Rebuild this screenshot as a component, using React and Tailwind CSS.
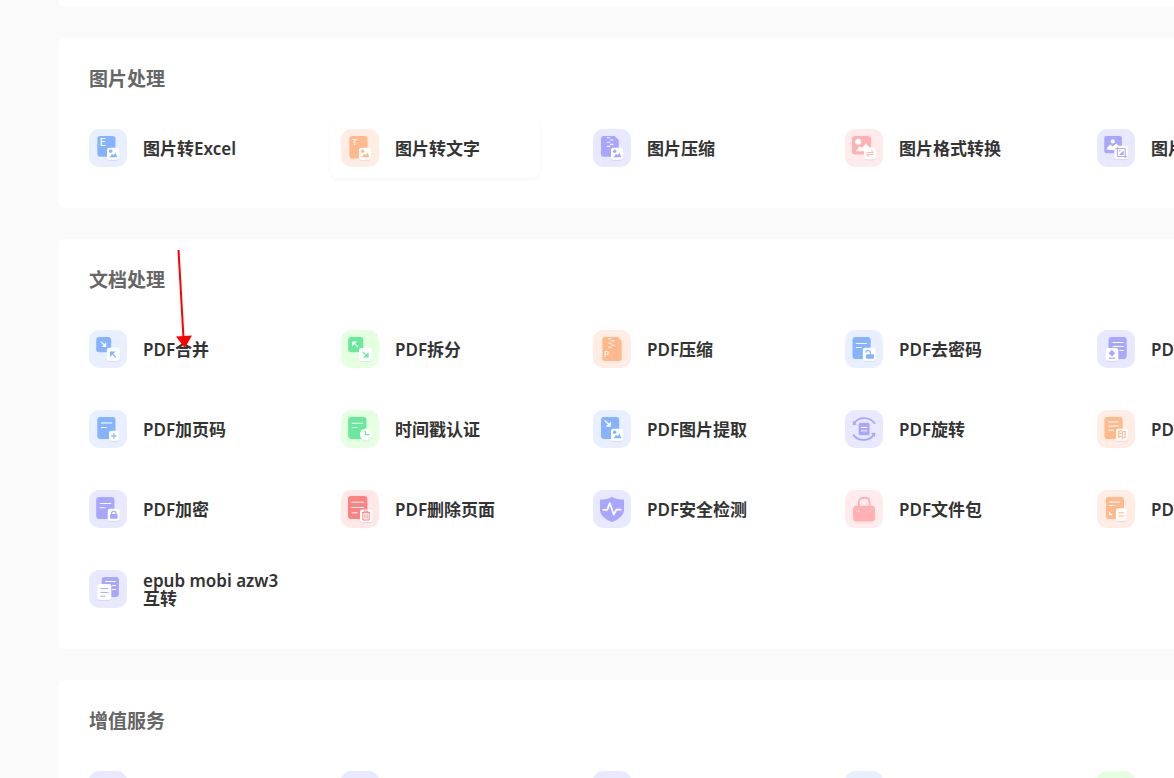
import clsx from 'clsx'

const tones = {
  blue:   { main: '#86b3ff', tile: 'bg-[#e8f0ff]' },
  orange: { main: '#ffb98c', tile: 'bg-[#ffede3]' },
  purple: { main: '#a8a6ff', tile: 'bg-[#e8e8ff]' },
  pink:   { main: '#ffb1b1', tile: 'bg-[#ffebeb]' },
  red:    { main: '#ff8282', tile: 'bg-[#ffe8e8]' },
  green:  { main: '#68e99b', tile: 'bg-[#e5ffe1]' },
}

function Badge({ x = 18, y = 18.7, w = 12, h = 12 }) {
  return (
    <>
      <rect x={x} y={y + 1.2} width={w} height={h} rx="2.4" fill="#5a5a96" opacity="0.1" />
      <rect x={x} y={y} width={w} height={h} rx="2.2" fill="#fff" />
    </>
  )
}

function Doc({ c, x = 7.5, y = 7, w = 18.2, h = 22, lines = [] }) {
  return (
    <>
      <rect x={x} y={y} width={w} height={h} rx="3" fill={c} />
      {lines.map(([lx, ly, lw]) => (
        <rect key={ly} x={lx} y={ly} width={lw} height="1" rx="0.4" fill="#fff" />
      ))}
    </>
  )
}

function PictureBadge({ c, x = 18, y = 18.7 }) {
  return (
    <>
      <Badge x={x} y={y} />
      <circle cx={x + 3.7} cy={y + 3.6} r="1.7" fill={c} />
      <path d={`M${x + 2.4} ${y + 9.6}l2.6-3.2 1.5.8 2.2-2 1.6 4.4z`} fill={c} />
    </>
  )
}

function ZipDoc({ c, x, y, w, h }) {
  return (
    <>
      <path d={`M${x + 2.5} ${y}h${w - 6.5}l4 4v${h - 6.5}a2.5 2.5 0 0 1-2.5 2.5h${5 - w}a2.5 2.5 0 0 1-2.5-2.5v${5 - h}a2.5 2.5 0 0 1 2.5-2.5z`} fill={c} />
      <path d={`M${x + 5.8} ${y + 1.8}h3.4M${x + 9} ${y + 4}h3.4M${x + 5.8} ${y + 6.2}h3.4M${x + 9} ${y + 8.4}h3.4M${x + 5.8} ${y + 10.4}h3.4`} stroke="#fff" strokeWidth="1.1" opacity="0.9" />
    </>
  )
}

function Letter({ x, y, size = 9, weight = 600, fill = '#fff', children }) {
  return (
    <text x={x} y={y} fontSize={size} fontWeight={weight} fill={fill} fontFamily="Inter, 'Noto Sans CJK SC', sans-serif">
      {children}
    </text>
  )
}

const icons = {
  imgExcel: (c) => (
    <>
      <Doc c={c} x={8.3} h={20.7} />
      <Letter x={10.8} y={17.4} size={10} weight={500}>E</Letter>
      <PictureBadge c={c} />
    </>
  ),
  imgText: (c) => (
    <>
      <Doc c={c} x={8.3} h={22.5} />
      <Letter x={11} y={15.8} size={8}>T</Letter>
      <PictureBadge c={c} />
    </>
  ),
  imgZip: (c) => (
    <>
      <ZipDoc c={c} x={8} y={7} w={17.7} h={20.7} />
      <PictureBadge c={c} />
    </>
  ),
  imgFormat: (c) => (
    <>
      <rect x="7" y="7" width="19.2" height="18.6" rx="3" fill={c} />
      <circle cx="13.2" cy="12.7" r="3" fill="#fff" />
      <path d="M10.5 22.2l4.2-5 2.6 1.6 3.8-4.6 3 4v4z" fill="#fff" />
      <Badge x={19} y={18.3} />
      <path d="M21.4 23.6h7l-2.2-2M28.6 25.6h-7l2.2 2" fill="none" stroke={c} strokeWidth="1" />
    </>
  ),
  imgCrop: (c) => (
    <>
      <rect x="7.3" y="7" width="17.6" height="17.2" rx="2" fill={c} />
      <circle cx="15.8" cy="12.4" r="2.1" fill="#fff" />
      <path d="M10.2 21v-2.4l3-3 2.6 2 3.4-3 3 2.4v4z" fill="#fff" />
      <Badge x={17.2} y={16.8} w={13.8} h={13.2} />
      <path d="M20.4 17.8v9.8h9.8M18.4 19.6h9.8v9.6" fill="none" stroke={c} strokeWidth="1" />
      <path d="M22 26l4.6-4.6V26z" fill={c} />
      <circle cx="22.8" cy="22" r="0.8" fill={c} />
    </>
  ),
  merge: (c) => (
    <>
      <rect x="7.2" y="7" width="15" height="15.2" rx="3" fill={c} />
      <path d="M11.6 11.6l4.4 3.8" stroke="#fff" strokeWidth="1.2" />
      <path d="M17.2 12.2v4.8h-4.8z" fill="#fff" />
      <Badge x={17.8} y={17.8} w={13} h={13} />
      <path d="M27 27.4l-4-4" stroke={c} strokeWidth="1.3" />
      <path d="M21 21.4h5.6L21 27z" fill={c} />
    </>
  ),
  split: (c) => (
    <>
      <rect x="7.2" y="7" width="15" height="15.2" rx="3" fill={c} />
      <path d="M17 17l-4-4.2" stroke="#fff" strokeWidth="1.2" />
      <path d="M11.2 11.4H16l-4.8 4.8z" fill="#fff" />
      <Badge x={17.9} y={17.9} w={13} h={13} />
      <path d="M21.4 21.6l4.2 4" stroke={c} strokeWidth="1.3" />
      <path d="M27.6 22.2v5.2H22z" fill={c} />
    </>
  ),
  zip: (c) => (
    <>
      <ZipDoc c={c} x={9.3} y={7} w={19.4} h={24} />
      <Letter x={11.2} y={27.4} size={7.5}>P</Letter>
    </>
  ),
  unlock: (c) => (
    <>
      <Doc c={c} lines={[[10.7, 13, 11.6], [10.7, 17, 6]]} />
      <Badge x={17.8} y={17.8} w={13} h={13} />
      <rect x="21" y="24.2" width="8" height="4.6" rx="1" fill={c} />
      <path d="M20.6 22.6c.2-2.6 4.6-2.6 4.8 0v2" fill="none" stroke={c} strokeWidth="1.1" />
    </>
  ),
  stamp: (c) => (
    <>
      <Doc c={c} x={11.5} lines={[[15.4, 12, 11.6], [15.4, 16, 11.6], [22.4, 20, 4.6]]} />
      <Badge x={8.9} y={18} w={12.4} h={12.8} />
      <path d="M14.9 20.2l2.8 3-2.8 2.8-2.8-2.8z" fill={c} stroke={c} strokeWidth="0.8" strokeLinejoin="round" />
      <rect x="11.8" y="27.6" width="6.4" height="1.2" fill={c} />
    </>
  ),
  addPage: (c) => (
    <>
      <Doc c={c} x={8.3} lines={[[11.7, 12.6, 11.6], [11.7, 17, 6]]} />
      <Badge x={20} y={20.8} w={9.8} h={10} />
      <path d="M24.9 23.2v5.4M22.2 25.9h5.4" stroke={c} strokeWidth="1.2" />
    </>
  ),
  time: (c) => (
    <>
      <Doc c={c} x={7.2} lines={[[10.6, 12.7, 11.6], [10.6, 17, 6]]} />
      <circle cx="24.8" cy="25.6" r="6.1" fill="#5a5a96" opacity="0.1" />
      <circle cx="24.8" cy="24.4" r="6" fill="#fff" />
      <path d="M24.4 21v3.6h4" fill="none" stroke={c} strokeWidth="1.2" />
    </>
  ),
  extract: (c) => (
    <>
      <Doc c={c} x={8} />
      <path d="M11.6 10.4l4.6 4.4" stroke="#fff" strokeWidth="1.2" />
      <path d="M17.8 11.6v5.2h-5.2z" fill="#fff" />
      <PictureBadge c={c} />
    </>
  ),
  rotate: (c) => (
    <>
      <rect x="13.7" y="12.7" width="10.8" height="12.6" rx="1.6" fill={c} />
      <path d="M16 17.4h6.2M16 20.8h6.2" stroke="#fff" strokeWidth="1" />
      <path d="M9 13.6c4.4-7.2 15.6-7.4 21 .2M8.2 24.4c4.6 7.4 16 7.4 20.6 0" fill="none" stroke={c} strokeWidth="1.8" />
      <path d="M8 10.6l3.8 4.2-4.2.2zM30 27.2L26.2 23l4.2-.2z" fill={c} />
    </>
  ),
  seal: (c) => (
    <>
      <Doc c={c} x={7.4} lines={[[11.2, 11.6, 10.6], [11.2, 15.6, 10.6], [11.2, 19.8, 5.6]]} />
      <Badge x={19} y={18.8} />
      <Letter x={20.4} y={28.4} size={9} weight={700} fill={c}>印</Letter>
    </>
  ),
  lock: (c) => (
    <>
      <Doc c={c} x={7.2} lines={[[10.6, 13, 11.8], [10.6, 17.2, 6]]} />
      <Badge x={18.7} y={18.8} />
      <rect x="21" y="24" width="7.6" height="4.8" rx="1" fill={c} />
      <path d="M22.6 24.4v-1.2c0-2.4 4.4-2.4 4.4 0v1.2" fill="none" stroke={c} strokeWidth="1.1" />
    </>
  ),
  remove: (c) => (
    <>
      <Doc c={c} x={7} y={6} w={19.4} h={23} lines={[[10.4, 11.8, 12.8], [10.4, 17, 12.8], [10.4, 22.2, 6]]} />
      <Badge x={19} y={19.4} w={12} h={12.6} />
      <path d="M20.8 22.6h8.4M23.2 22.4v-1.2h3.6v1.2M21.8 22.8v7.2h6.4v-7.2M23.9 24.4v4M26.1 24.4v4" fill="none" stroke={c} strokeWidth="1" />
    </>
  ),
  safe: (c) => (
    <>
      <path d="M19 6.8c3.6 2.2 7.6 3 12 3v9.6c0 6-5.4 10-12 12.6-6.6-2.6-12-6.6-12-12.6V9.8c4.4 0 8.4-.8 12-3z" fill={c} />
      <path d="M10.2 19.8h4l2.6-6.6 4 11.4 2.6-5h4.4" fill="none" stroke="#fff" strokeWidth="1.8" strokeLinejoin="round" strokeLinecap="round" />
    </>
  ),
  bag: (c) => (
    <>
      <rect x="8.6" y="17.6" width="21" height="15" rx="3.5" fill={c} opacity="0.35" />
      <rect x="8" y="15.7" width="22" height="15.6" rx="3.5" fill={c} />
      <path d="M13.8 18v-5.6c0-2.6 1.4-4.4 3.8-4.4h3.2c2.4 0 3.8 1.8 3.8 4.4V18" fill="none" stroke={c} strokeWidth="1.8" />
      <path d="M12.6 21.2h2M23.6 21.2h2" stroke="#fff" strokeWidth="1" opacity="0.8" />
    </>
  ),
  convert: (c) => (
    <>
      <Doc c={c} x={8.8} lines={[[11.8, 11.6, 11.6], [11.8, 15, 6]]} />
      <path d="M11.8 21.2l4 4h-4z" fill="#fff" />
      <Badge x={19} y={18.3} w={10.5} h={12.4} />
      <path d="M21.4 22.8h5.8M21.4 26h5.8" stroke={c} strokeWidth="1.1" />
    </>
  ),
  epub: (c) => (
    <>
      <Doc c={c} x={12.7} w={17.2} h={20} lines={[[16, 11, 11], [22.6, 14.9, 4.4], [22.6, 19, 4.4]]} />
      <Badge x={8.3} y={14} w={14} h={15.8} />
      <path d="M11.4 18.6h8M11.4 22.4h8M11.4 26.2h5" stroke={c} strokeWidth="1" />
    </>
  ),
  page: (c) => <Doc c={c} lines={[[10.7, 13, 11.6], [10.7, 17, 6]]} />,
}

const sections = [
  {
    title: '图片处理',
    tools: [
      { label: '图片转Excel', icon: 'imgExcel', tone: 'blue' },
      { label: '图片转文字', icon: 'imgText', tone: 'orange', active: true },
      { label: '图片压缩', icon: 'imgZip', tone: 'purple' },
      { label: '图片格式转换', icon: 'imgFormat', tone: 'pink' },
      { label: '图片裁剪', icon: 'imgCrop', tone: 'purple' },
    ],
  },
  {
    title: '文档处理',
    tools: [
      { label: 'PDF合并', icon: 'merge', tone: 'blue' },
      { label: 'PDF拆分', icon: 'split', tone: 'green' },
      { label: 'PDF压缩', icon: 'zip', tone: 'orange' },
      { label: 'PDF去密码', icon: 'unlock', tone: 'blue' },
      { label: 'PDF去水印', icon: 'stamp', tone: 'purple' },
      { label: 'PDF加页码', icon: 'addPage', tone: 'blue' },
      { label: '时间戳认证', icon: 'time', tone: 'green' },
      { label: 'PDF图片提取', icon: 'extract', tone: 'blue' },
      { label: 'PDF旋转', icon: 'rotate', tone: 'purple' },
      { label: 'PDF加水印', icon: 'seal', tone: 'orange' },
      { label: 'PDF加密', icon: 'lock', tone: 'purple' },
      { label: 'PDF删除页面', icon: 'remove', tone: 'red' },
      { label: 'PDF安全检测', icon: 'safe', tone: 'purple' },
      { label: 'PDF文件包', icon: 'bag', tone: 'pink' },
      { label: 'PDF页面提取', icon: 'convert', tone: 'orange' },
      { label: 'epub mobi azw3 互转', icon: 'epub', tone: 'purple' },
    ],
  },
  {
    title: '增值服务',
    tools: [
      { label: '论文查重', icon: 'page', tone: 'purple' },
      { label: '文档翻译', icon: 'page', tone: 'purple' },
      { label: '人工转换', icon: 'page', tone: 'purple' },
      { label: '文档校对', icon: 'page', tone: 'blue' },
      { label: '文档排版', icon: 'page', tone: 'green' },
    ],
  },
]

function ToolLink({ label, icon, tone, active }) {
  const { main, tile } = tones[tone]

  return (
    <a
      href="#"
      className={clsx(
        'flex h-[60px] items-center gap-4 rounded-lg pl-[11px] hover:shadow-[0_2px_4px_rgba(0,0,0,0.04)]',
        active && 'shadow-[0_2px_4px_rgba(0,0,0,0.04)]'
      )}
    >
      <span className={clsx('size-[38px] shrink-0 overflow-hidden rounded-[10px]', tile)}>
        <svg viewBox="0 0 38 38" className="size-full" aria-hidden="true">{icons[icon](main)}</svg>
      </span>
      <span className="pt-0.5 text-[17px] leading-[18px] font-semibold text-[#333]">{label}</span>
    </a>
  )
}

function Section({ title, tools }) {
  return (
    <section className="rounded-lg bg-white px-5 pb-[30px]">
      <h2 className="flex h-20 items-center pt-0.5 pl-[11px] text-[19px] leading-6 font-bold text-[#666]">{title}</h2>
      <div className="grid grid-cols-[repeat(5,210px)] gap-x-[42px] gap-y-5">
        {tools.map((tool) => <ToolLink key={tool.label} {...tool} />)}
      </div>
    </section>
  )
}

export default function App() {
  return (
    <div className="relative h-screen overflow-hidden bg-[#fafafa] font-['Noto_Sans','Noto_Sans_CJK_SC',sans-serif]">
      <main className="flex w-full min-w-[1320px] flex-col gap-[31px] pl-[58px]">
        <div className="h-[7px] rounded-b-lg bg-white" />
        {sections.map((section) => <Section key={section.title} {...section} />)}
      </main>

      {/* pointer drawn over the merge tool */}
      <svg className="pointer-events-none absolute top-[248px] left-[170px] h-[102px] w-[30px]" viewBox="0 0 30 102" aria-hidden="true">
        <path d="M8.5 2l5 88" stroke="#f00" strokeWidth="2" />
        <path d="M6 88.5l16-1L14.8 100z" fill="#f00" />
      </svg>
    </div>
  )
}
